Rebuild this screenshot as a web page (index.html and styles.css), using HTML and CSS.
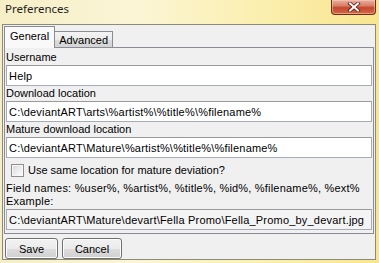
FILE: index.html
```html
<!DOCTYPE html>
<html lang="en">
<head>
    <meta charset="UTF-8">
    <title>Preferences</title>
    <link rel="stylesheet" href="styles.css">
</head>
<body>
    <div class="window">
        <div class="titlebar">
            <span class="title">Preferences</span>
            <span class="close">
                <svg width="14" height="10" viewBox="0 0 14 10">
                    <path d="M3 1.5 L11 8.5 M11 1.5 L3 8.5" stroke="#5a1a10" stroke-width="3.6" stroke-linecap="square"/>
                    <path d="M3 1.5 L11 8.5 M11 1.5 L3 8.5" stroke="#ffffff" stroke-width="2" stroke-linecap="square"/>
                </svg>
            </span>
        </div>
        <div class="client">
            <div class="tabs">
                <div class="tab active">General</div>
                <div class="tab">Advanced</div>
            </div>
            <div class="pane">
                <label class="field-label first">Username</label>
                <input class="text" type="text" value="Help">
                <label class="field-label">Download location</label>
                <input class="text" type="text" value="C:\deviantART\arts\%artist%\%title%\%filename%">
                <label class="field-label">Mature download location</label>
                <input class="text" type="text" value="C:\deviantART\Mature\%artist%\%title%\%filename%">
                <label class="check-row">
                    <span class="checkbox"></span>
                    Use same location for mature deviation?
                </label>
                <div class="info">Field names: %user%, %artist%, %title%, %id%, %filename%, %ext%</div>
                <div class="info">Example:</div>
                <input class="text readonly" type="text" readonly value="C:\deviantART\Mature\devart\Fella Promo\Fella_Promo_by_devart.jpg">
            </div>
            <div class="buttons">
                <button class="btn save">Save</button>
                <button class="btn cancel">Cancel</button>
            </div>
        </div>
    </div>
</body>
</html>
```

FILE: styles.css
```css
body {
    margin: 0;
    width: 379px;
    height: 263px;
    overflow: hidden;
    font-family: 'Liberation Sans', Arial, sans-serif;
    font-size: 11px;
    color: #000;
}
.window {
    height: 263px;
    display: flex;
    flex-direction: column;
    background: linear-gradient(90deg, #f6eec6 0%, #fbf5d6 35%, #fbefae 70%, #f8e58e 100%);
    box-sizing: border-box;
    padding: 0 3px 3px 2px;
}
.titlebar {
    height: 24px;
    display: flex;
    justify-content: space-between;
    align-items: flex-start;
    white-space: nowrap;
}
.title {
    font-family: 'Noto Sans', 'Liberation Sans', sans-serif;
    font-size: 11.5px;
    color: #1e1e1e;
    padding: 1px 0 0 3px;
}
.close {
    width: 45px;
    height: 15px;
    box-sizing: border-box;
    border: 1px solid #6e2c20;
    border-top: none;
    border-radius: 0 0 4px 4px;
    background: linear-gradient(180deg, #eab0a0 0%, #d98068 40%, #c5472f 55%, #d46a45 100%);
    box-shadow: inset 0 0 0 1px rgba(255, 210, 190, 0.5);
    display: flex;
    align-items: center;
    justify-content: center;
}
.client {
    flex: 1;
    display: flex;
    flex-direction: column;
    background: #f0f0f0;
    border: 1px solid #8c8a78;
    padding: 1px 1px 0 1px;
    white-space: nowrap;
}
.tabs {
    display: flex;
    align-items: flex-end;
    height: 22px;
    margin-bottom: -1px;
}
.tab {
    border: 1px solid #898c95;
    border-bottom: none;
    padding: 0 4px;
    height: 16px;
    line-height: 16px;
    background: linear-gradient(180deg, #f3f3f3 0%, #ebebeb 50%, #dddddd 51%, #d2d2d2 100%);
    margin-left: -1px;
}
.tab.active {
    height: 21px;
    line-height: 19px;
    padding: 0 5px;
    margin-left: 0;
    background: #f9f9f9;
    position: relative;
    z-index: 1;
}
.pane {
    border: 1px solid #898c95;
    background: #f0f0f0;
    padding: 1px 1px 3px 0;
    display: flex;
    flex-direction: column;
}
.field-label {
    display: block;
    height: 15px;
    line-height: 15px;
    padding-left: 1px;
}
.field-label.first {
    height: 16px;
    line-height: 17px;
}
.text {
    font: inherit;
    letter-spacing: 0.2px;
    height: 21px;
    box-sizing: border-box;
    border: 1px solid #a5acb5;
    border-top-color: #9a9a9a;
    background: #fff;
    padding: 0 2px;
    margin: 0 0 0 1px;
    color: #000;
}
.text.readonly {
    background: #f4f4f4;
    margin-top: 1px;
}
.check-row {
    display: flex;
    align-items: center;
    gap: 4px;
    height: 24px;
    padding-left: 6px;
}
.checkbox {
    width: 11px;
    height: 11px;
    border: 1px solid #8e8f8f;
    background: linear-gradient(135deg, #d8d8d8 0%, #eeeeee 55%, #ffffff 100%);
    box-shadow: inset 0 0 0 1px #f6f6f6;
}
.info {
    height: 13px;
    line-height: 13px;
    padding-left: 1px;
    letter-spacing: 0.2px;
}
.buttons {
    display: flex;
    gap: 4px;
    padding: 4px 0 0 1px;
}
.btn {
    font: inherit;
    height: 21px;
    border: 1px solid #707070;
    border-radius: 3px;
    background: linear-gradient(180deg, #f2f2f2 0%, #ebebeb 50%, #dddddd 51%, #cfcfcf 100%);
    box-shadow: inset 0 0 0 1px #fcfcfc;
    padding: 0;
    color: #000;
}
.btn.save {
    width: 53px;
}
.btn.cancel {
    width: 60px;
}
```
